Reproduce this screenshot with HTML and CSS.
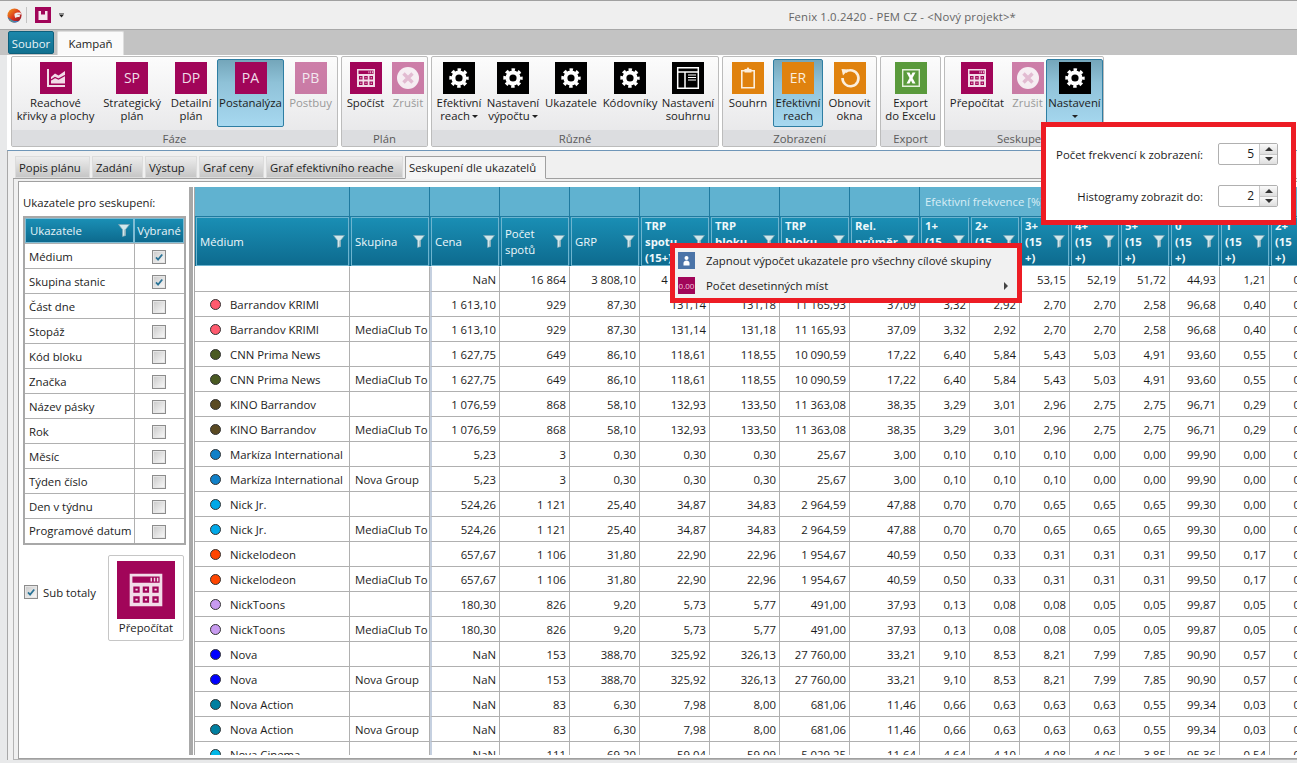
FILE: index.html
```html
<!DOCTYPE html>
<html lang="cs">
<head>
<meta charset="utf-8">
<title>Fenix</title>
<link rel="stylesheet" href="styles.css">
</head>
<body>
<svg class="sprite" width="0" height="0">
  <defs>
    <linearGradient id="logo-a" x1="0" y1="0" x2="1" y2="1"><stop offset="0" stop-color="#f4a21c"/><stop offset=".55" stop-color="#d8301c"/><stop offset="1" stop-color="#7c1430"/></linearGradient>
  </defs>
  <symbol id="gear" viewBox="0 0 32 32">
    <circle cx="16" cy="16" r="5.6" fill="none" stroke="#fff" stroke-width="4"/>
    <circle cx="16" cy="16" r="8.2" fill="none" stroke="#fff" stroke-width="3" stroke-dasharray="3.4 3.04" stroke-dashoffset="1.7"/>
  </symbol>
  <symbol id="calc" viewBox="0 0 32 32">
    <path fill="#f2dce8" fill-rule="evenodd" d="M7 7h18v18H7z M8.500 8.500v3.500h15V8.500z M9 14v3.500h3.500V14z M14.200 14v3.500h3.500V14z M19.500 14v3.500H23V14z M9 19.500V23h3.500v-3.500z M14.200 19.500V23h3.500v-3.500z M19.500 19.500V23H23v-3.500z"/>
    <path fill="#f2dce8" d="M18.500 9.300h.8v2h-.8zM20.300 9.300h.8v2h-.8zM22 9.300h.8v2H22zM10.200 15.300h1.200v1h-1.200zM15.400 15.300h1.200v1h-1.200zM20.700 15.300h1.200v1h-1.200zM10.200 20.800h1.200v1h-1.200zM15.400 20.800h1.200v1h-1.200zM20.700 20.800h1.200v1h-1.200z"/>
  </symbol>
  <symbol id="cancel" viewBox="0 0 32 32">
    <circle cx="16" cy="16" r="11" fill="#f6e6ef"/>
    <path d="M11.500 11.500l9 9M20.500 11.500l-9 9" stroke="#cf81ad" stroke-width="3.400"/>
  </symbol>
  <symbol id="funnel" viewBox="0 0 12 13">
    <path d="M.5.5h11L7.500 5.500v6l-3 1v-7z" fill="#d2e8ec" stroke="#7fa6b4" stroke-width=".7"/>
    <path d="M6.300 5.500h1.200v6l-1.200.4z" fill="#93b4bd"/>
  </symbol>
  <symbol id="tick" viewBox="0 0 14 14">
    <path d="M3.500 7.500l2.400 2.600L10.800 4" fill="none" stroke="#2a7396" stroke-width="2"/>
  </symbol>
</svg>

<div class="app">
  <div class="titlebar">
    <svg class="logo" viewBox="0 0 16 16" width="15" height="15">
      <circle cx="8" cy="8" r="7.500" fill="url(#logo-a)"/>
      <path d="M.8 9.500c.8 3.500 3.700 6 7.200 6 2 0 3.800-.8 5-2-3 .8-6.500.4-8.500-1.200C3 11.300 2 10.500.8 9.500z" fill="#3f7fc0"/>
      <path d="M2 11.800c1.200 2 3.500 3.500 6 3.600-2-1-3.800-2-6-3.600z" fill="#7cb53c"/>
      <path d="M8 6.200c2-1.700 4.500-1.700 7-1l-.6 2c-1.800-.5-3.400-.3-4.600.5 1.200-.2 2.800-.2 4.200.1l-.8 2c-1.700-.4-3-.1-4.200.8-.8-1.200-1.200-3.200-1-4.400z" fill="#efefef"/>
    </svg>
    <span class="qa-sep"></span>
    <svg class="qa-save" viewBox="0 0 16 16" width="16" height="16">
      <rect width="16" height="16" fill="#a10559"/>
      <path d="M3.500 4h9v9h-9z" fill="#f6e6ef"/>
      <path d="M6 4h4v3.500H6z" fill="#a10559"/>
    </svg>
    <span class="qa-more"></span>
    <span class="app-title">Fenix 1.0.2420 - PEM CZ - &lt;Nový projekt&gt;*</span>
  </div>

  <div class="ribbon-tabs">
    <span class="rt rt-file">Soubor</span>
    <span class="rt rt-on">Kampaň</span>
  </div>

  <div class="ribbon">
    <section class="group g-faze">
      <div class="group-btns">
        <div class="rb"><svg class="ico ico-mag" viewBox="0 0 32 32"><path fill="none" stroke="#f2dce8" stroke-width="2" d="M8 7v17h17"/><path fill="#f2dce8" d="M11 21.500V15l4-3.500 3.500 2L25 9v12.500z"/><path fill="none" stroke="#a10559" stroke-width="1.300" d="M11 18l4-2.500 3.500 1.500 6.500-3.500"/></svg><span>Reachové<br>křivky a plochy</span></div>
        <div class="rb"><span class="ico ico-mag">SP</span><span>Strategický<br>plán</span></div>
        <div class="rb"><span class="ico ico-mag">DP</span><span>Detailní<br>plán</span></div>
        <div class="rb rb-on"><span class="ico ico-mag">PA</span><span>Postanalýza</span></div>
        <div class="rb rb-off"><span class="ico ico-mag">PB</span><span>Postbuy</span></div>
      </div>
      <div class="group-name">Fáze</div>
    </section>
    <section class="group g-plan">
      <div class="group-btns">
        <div class="rb"><svg class="ico ico-mag"><use href="#calc"/></svg><span>Spočíst</span></div>
        <div class="rb rb-off"><svg class="ico ico-mag"><use href="#cancel"/></svg><span>Zrušit</span></div>
      </div>
      <div class="group-name">Plán</div>
    </section>
    <section class="group g-ruzne">
      <div class="group-btns">
        <div class="rb"><svg class="ico ico-blk"><use href="#gear"/></svg><span>Efektivní<br>reach<i class="caret"></i></span></div>
        <div class="rb"><svg class="ico ico-blk"><use href="#gear"/></svg><span>Nastavení<br>výpočtu<i class="caret"></i></span></div>
        <div class="rb"><svg class="ico ico-blk"><use href="#gear"/></svg><span>Ukazatele</span></div>
        <div class="rb"><svg class="ico ico-blk"><use href="#gear"/></svg><span>Kódovníky</span></div>
        <div class="rb"><svg class="ico ico-blk" viewBox="0 0 32 32"><path fill="none" stroke="#fff" stroke-width="1.500" d="M5.700 5.700h20.600v20.600H5.700zM6 10h20M13 10v16"/><path stroke="#fff" d="M16 13h8M16 15.500h8M16 18h8"/></svg><span>Nastavení<br>souhrnu</span></div>
      </div>
      <div class="group-name">Různé</div>
    </section>
    <section class="group g-zobr">
      <div class="group-btns">
        <div class="rb"><svg class="ico ico-org" viewBox="0 0 32 32"><path fill="none" stroke="#fbeedd" stroke-width="1.600" d="M9.800 8.800h12.400v17H9.800z"/><path fill="#fbeedd" d="M12.500 7h2l1.500-2 1.500 2h2v3.500h-7z"/></svg><span>Souhrn</span></div>
        <div class="rb rb-on"><span class="ico ico-org">ER</span><span>Efektivní<br>reach</span></div>
        <div class="rb"><svg class="ico ico-org" viewBox="0 0 32 32"><path fill="none" stroke="#fbeedd" stroke-width="2.600" d="M11.500 10a8 8 0 1 1-3 6"/><path fill="#fbeedd" d="M7.500 7l7 .5-5.500 6z"/></svg><span>Obnovit<br>okna</span></div>
      </div>
      <div class="group-name">Zobrazení</div>
    </section>
    <section class="group g-export">
      <div class="group-btns">
        <div class="rb"><svg class="ico ico-grn" viewBox="0 0 32 32"><path fill="none" stroke="#e4f0dc" stroke-width="1.400" d="M7.700 7.700h16.600v16.600H7.700z"/><path fill="#fff" d="M11.500 10.500h3l1.500 3 1.500-3h3l-3 5.500 3 5.500h-3L16 18.500l-1.500 3h-3l3-5.500z"/></svg><span>Export<br>do Excelu</span></div>
      </div>
      <div class="group-name">Export</div>
    </section>
    <section class="group g-sesk">
      <div class="group-btns">
        <div class="rb"><svg class="ico ico-mag"><use href="#calc"/></svg><span>Přepočítat</span></div>
        <div class="rb rb-off"><svg class="ico ico-mag"><use href="#cancel"/></svg><span>Zrušit</span></div>
        <div class="rb rb-on"><svg class="ico ico-blk"><use href="#gear"/></svg><span>Nastavení<br><i class="caret caret-solo"></i></span></div>
      </div>
      <div class="group-name">Seskupení</div>
    </section>
  </div>

  <div class="doc">
    <div class="tabs">
      <span class="tab">Popis plánu</span>
      <span class="tab">Zadání</span>
      <span class="tab">Výstup</span>
      <span class="tab">Graf ceny</span>
      <span class="tab">Graf efektivního reache</span>
      <span class="tab tab-on">Seskupení dle ukazatelů</span>
    </div>
    <div class="tab-page">
      <div class="page-inner">
        <div class="side">
          <div class="side-head">Ukazatele pro seskupení:</div>
          <table class="ind">
            <thead>
              <tr><th><div class="ind-h">Ukazatele<svg class="fn"><use href="#funnel"/></svg></div></th><th><div class="ind-h ind-h2">Vybrané</div></th></tr>
            </thead>
            <tbody>
              <tr><td>Médium</td><td><span class="cb"><svg><use href="#tick"/></svg></span></td></tr>
              <tr><td>Skupina stanic</td><td><span class="cb"><svg><use href="#tick"/></svg></span></td></tr>
              <tr><td>Část dne</td><td><span class="cb"></span></td></tr>
              <tr><td>Stopáž</td><td><span class="cb"></span></td></tr>
              <tr><td>Kód bloku</td><td><span class="cb"></span></td></tr>
              <tr><td>Značka</td><td><span class="cb"></span></td></tr>
              <tr><td>Název pásky</td><td><span class="cb"></span></td></tr>
              <tr><td>Rok</td><td><span class="cb"></span></td></tr>
              <tr><td>Měsíc</td><td><span class="cb"></span></td></tr>
              <tr><td>Týden číslo</td><td><span class="cb"></span></td></tr>
              <tr><td>Den v týdnu</td><td><span class="cb"></span></td></tr>
              <tr><td>Programové datum</td><td><span class="cb"></span></td></tr>
            </tbody>
          </table>
          <div class="side-foot">
            <label class="sub"><span class="cb"><svg><use href="#tick"/></svg></span>Sub totaly</label>
            <div class="calc-btn">
              <svg class="calc-ico"><use href="#calc"/></svg>
              <span>Přepočítat</span>
            </div>
          </div>
        </div>
        <div class="split"></div>
        <div class="grid-wrap">
          <table class="grid">
            <colgroup><col class="c-med"><col class="c-sk"><col class="c-70"><col class="c-70"><col class="c-70"><col class="c-70"><col class="c-70"><col class="c-70"><col class="c-70"><col class="c-50"><col class="c-50"><col class="c-50"><col class="c-50"><col class="c-50"><col class="c-50"><col class="c-50"><col class="c-50"></colgroup>
            <thead>
              <tr class="band"><th></th><th></th><th></th><th></th><th></th><th></th><th></th><th></th><th></th><th colspan="8">Efektivní frekvence [%]</th></tr>
              <tr class="heads">
                <th><div class="hd"><span>Médium</span><svg class="fn"><use href="#funnel"/></svg></div></th>
                <th><div class="hd"><span>Skupina</span><svg class="fn"><use href="#funnel"/></svg></div></th>
                <th><div class="hd"><span>Cena</span><svg class="fn"><use href="#funnel"/></svg></div></th>
                <th><div class="hd"><span>Počet spotů</span><svg class="fn"><use href="#funnel"/></svg></div></th>
                <th><div class="hd"><span>GRP</span><svg class="fn"><use href="#funnel"/></svg></div></th>
                <th><div class="hd hd-b"><span>TRP<br>spotu<br>(15+)</span><svg class="fn"><use href="#funnel"/></svg></div></th>
                <th><div class="hd hd-b"><span>TRP<br>bloku<br>(15+)</span><svg class="fn"><use href="#funnel"/></svg></div></th>
                <th><div class="hd hd-b"><span>TRP<br>bloku<br>(15+)</span><svg class="fn"><use href="#funnel"/></svg></div></th>
                <th><div class="hd hd-b"><span>Rel.<br>průměr<br>(15+)</span><svg class="fn"><use href="#funnel"/></svg></div></th>
                <th><div class="hd hd-b"><span>1+<br>(15<br>+)</span><svg class="fn"><use href="#funnel"/></svg></div></th>
                <th><div class="hd hd-b"><span>2+<br>(15<br>+)</span><svg class="fn"><use href="#funnel"/></svg></div></th>
                <th><div class="hd hd-b"><span>3+<br>(15<br>+)</span><svg class="fn"><use href="#funnel"/></svg></div></th>
                <th><div class="hd hd-b"><span>4+<br>(15<br>+)</span><svg class="fn"><use href="#funnel"/></svg></div></th>
                <th><div class="hd hd-b"><span>5+<br>(15<br>+)</span><svg class="fn"><use href="#funnel"/></svg></div></th>
                <th><div class="hd hd-b"><span>0<br>(15<br>+)</span><svg class="fn"><use href="#funnel"/></svg></div></th>
                <th><div class="hd hd-b"><span>1<br>(15<br>+)</span><svg class="fn"><use href="#funnel"/></svg></div></th>
                <th><div class="hd hd-b"><span>2+<br>(15<br>+)</span><svg class="fn"><use href="#funnel"/></svg></div></th>
              </tr>
            </thead>
            <tbody>
              <tr><td></td><td></td><td>NaN</td><td>16&nbsp;864</td><td>3&nbsp;808,10</td><td>4&nbsp;121,38</td><td></td><td></td><td></td><td></td><td></td><td>53,15</td><td>52,19</td><td>51,72</td><td>44,93</td><td>1,21</td><td>0,28</td></tr>
              <tr><td><i class="dot d-barr"></i>Barrandov KRIMI</td><td></td><td>1&nbsp;613,10</td><td>929</td><td>87,30</td><td>131,14</td><td>131,18</td><td>11&nbsp;165,93</td><td>37,09</td><td>3,32</td><td>2,92</td><td>2,70</td><td>2,70</td><td>2,58</td><td>96,68</td><td>0,40</td><td>0,22</td></tr>
              <tr><td><i class="dot d-barr"></i>Barrandov KRIMI</td><td>MediaClub To</td><td>1&nbsp;613,10</td><td>929</td><td>87,30</td><td>131,14</td><td>131,18</td><td>11&nbsp;165,93</td><td>37,09</td><td>3,32</td><td>2,92</td><td>2,70</td><td>2,70</td><td>2,58</td><td>96,68</td><td>0,40</td><td>0,22</td></tr>
              <tr><td><i class="dot d-cnn"></i>CNN Prima News</td><td></td><td>1&nbsp;627,75</td><td>649</td><td>86,10</td><td>118,61</td><td>118,55</td><td>10&nbsp;090,59</td><td>17,22</td><td>6,40</td><td>5,84</td><td>5,43</td><td>5,03</td><td>4,91</td><td>93,60</td><td>0,55</td><td>0,41</td></tr>
              <tr><td><i class="dot d-cnn"></i>CNN Prima News</td><td>MediaClub To</td><td>1&nbsp;627,75</td><td>649</td><td>86,10</td><td>118,61</td><td>118,55</td><td>10&nbsp;090,59</td><td>17,22</td><td>6,40</td><td>5,84</td><td>5,43</td><td>5,03</td><td>4,91</td><td>93,60</td><td>0,55</td><td>0,41</td></tr>
              <tr><td><i class="dot d-kino"></i>KINO Barrandov</td><td></td><td>1&nbsp;076,59</td><td>868</td><td>58,10</td><td>132,93</td><td>133,50</td><td>11&nbsp;363,08</td><td>38,35</td><td>3,29</td><td>3,01</td><td>2,96</td><td>2,75</td><td>2,75</td><td>96,71</td><td>0,29</td><td>0,05</td></tr>
              <tr><td><i class="dot d-kino"></i>KINO Barrandov</td><td>MediaClub To</td><td>1&nbsp;076,59</td><td>868</td><td>58,10</td><td>132,93</td><td>133,50</td><td>11&nbsp;363,08</td><td>38,35</td><td>3,29</td><td>3,01</td><td>2,96</td><td>2,75</td><td>2,75</td><td>96,71</td><td>0,29</td><td>0,05</td></tr>
              <tr><td><i class="dot d-mark"></i>Markíza International</td><td></td><td>5,23</td><td>3</td><td>0,30</td><td>0,30</td><td>0,30</td><td>25,67</td><td>3,00</td><td>0,10</td><td>0,10</td><td>0,10</td><td>0,00</td><td>0,00</td><td>99,90</td><td>0,00</td><td>0,00</td></tr>
              <tr><td><i class="dot d-mark"></i>Markíza International</td><td>Nova Group</td><td>5,23</td><td>3</td><td>0,30</td><td>0,30</td><td>0,30</td><td>25,67</td><td>3,00</td><td>0,10</td><td>0,10</td><td>0,10</td><td>0,00</td><td>0,00</td><td>99,90</td><td>0,00</td><td>0,00</td></tr>
              <tr><td><i class="dot d-nickjr"></i>Nick Jr.</td><td></td><td>524,26</td><td>1&nbsp;121</td><td>25,40</td><td>34,87</td><td>34,83</td><td>2&nbsp;964,59</td><td>47,88</td><td>0,70</td><td>0,70</td><td>0,65</td><td>0,65</td><td>0,65</td><td>99,30</td><td>0,00</td><td>0,05</td></tr>
              <tr><td><i class="dot d-nickjr"></i>Nick Jr.</td><td>MediaClub To</td><td>524,26</td><td>1&nbsp;121</td><td>25,40</td><td>34,87</td><td>34,83</td><td>2&nbsp;964,59</td><td>47,88</td><td>0,70</td><td>0,70</td><td>0,65</td><td>0,65</td><td>0,65</td><td>99,30</td><td>0,00</td><td>0,05</td></tr>
              <tr><td><i class="dot d-nickel"></i>Nickelodeon</td><td></td><td>657,67</td><td>1&nbsp;106</td><td>31,80</td><td>22,90</td><td>22,96</td><td>1&nbsp;954,67</td><td>40,59</td><td>0,50</td><td>0,33</td><td>0,31</td><td>0,31</td><td>0,31</td><td>99,50</td><td>0,17</td><td>0,02</td></tr>
              <tr><td><i class="dot d-nickel"></i>Nickelodeon</td><td>MediaClub To</td><td>657,67</td><td>1&nbsp;106</td><td>31,80</td><td>22,90</td><td>22,96</td><td>1&nbsp;954,67</td><td>40,59</td><td>0,50</td><td>0,33</td><td>0,31</td><td>0,31</td><td>0,31</td><td>99,50</td><td>0,17</td><td>0,02</td></tr>
              <tr><td><i class="dot d-toons"></i>NickToons</td><td></td><td>180,30</td><td>826</td><td>9,20</td><td>5,73</td><td>5,77</td><td>491,00</td><td>37,93</td><td>0,13</td><td>0,08</td><td>0,08</td><td>0,05</td><td>0,05</td><td>99,87</td><td>0,05</td><td>0,00</td></tr>
              <tr><td><i class="dot d-toons"></i>NickToons</td><td>MediaClub To</td><td>180,30</td><td>826</td><td>9,20</td><td>5,73</td><td>5,77</td><td>491,00</td><td>37,93</td><td>0,13</td><td>0,08</td><td>0,08</td><td>0,05</td><td>0,05</td><td>99,87</td><td>0,05</td><td>0,00</td></tr>
              <tr><td><i class="dot d-nova"></i>Nova</td><td></td><td>NaN</td><td>153</td><td>388,70</td><td>325,92</td><td>326,13</td><td>27&nbsp;760,00</td><td>33,21</td><td>9,10</td><td>8,53</td><td>8,21</td><td>7,99</td><td>7,85</td><td>90,90</td><td>0,57</td><td>0,32</td></tr>
              <tr><td><i class="dot d-nova"></i>Nova</td><td>Nova Group</td><td>NaN</td><td>153</td><td>388,70</td><td>325,92</td><td>326,13</td><td>27&nbsp;760,00</td><td>33,21</td><td>9,10</td><td>8,53</td><td>8,21</td><td>7,99</td><td>7,85</td><td>90,90</td><td>0,57</td><td>0,32</td></tr>
              <tr><td><i class="dot d-action"></i>Nova Action</td><td></td><td>NaN</td><td>83</td><td>6,30</td><td>7,98</td><td>8,00</td><td>681,06</td><td>11,46</td><td>0,66</td><td>0,63</td><td>0,63</td><td>0,63</td><td>0,55</td><td>99,34</td><td>0,03</td><td>0,00</td></tr>
              <tr><td><i class="dot d-action"></i>Nova Action</td><td>Nova Group</td><td>NaN</td><td>83</td><td>6,30</td><td>7,98</td><td>8,00</td><td>681,06</td><td>11,46</td><td>0,66</td><td>0,63</td><td>0,63</td><td>0,63</td><td>0,55</td><td>99,34</td><td>0,03</td><td>0,00</td></tr>
              <tr><td><i class="dot d-cinema"></i>Nova Cinema</td><td></td><td>NaN</td><td>111</td><td>69,20</td><td>59,04</td><td>59,09</td><td>5&nbsp;029,25</td><td>11,64</td><td>4,64</td><td>4,10</td><td>4,08</td><td>4,06</td><td>3,85</td><td>95,36</td><td>0,54</td><td>0,02</td></tr>
            </tbody>
          </table>
        </div>
      </div>
    </div>
  </div>
</div>

<!-- rozbalene Nastaveni -->
<div class="pop">
  <div class="pop-row">
    <span>Počet frekvencí k zobrazení:</span>
    <div class="spin"><span class="spin-val">5</span><span class="spin-arrows"><i class="up"></i><i class="down"></i></span></div>
  </div>
  <div class="pop-row">
    <span>Histogramy zobrazit do:</span>
    <div class="spin"><span class="spin-val">2</span><span class="spin-arrows"><i class="up"></i><i class="down"></i></span></div>
  </div>
</div>

<!-- kontextove menu nad hlavickou -->
<div class="ctx">
  <div class="ctx-item">
    <svg class="ctx-ico" viewBox="0 0 17 17"><rect width="17" height="17" fill="#4b74a8"/><circle cx="8.500" cy="6" r="2" fill="#fff"/><path d="M5.500 13.500v-2.500c0-1.500 1.500-2.500 3-2.500s3 1 3 2.500v2.500z" fill="#fff"/></svg>
    <span>Zapnout výpočet ukazatele pro všechny cílové skupiny</span>
  </div>
  <div class="ctx-item">
    <span class="ctx-ico ctx-num">0.00</span>
    <span>Počet desetinných míst</span>
    <i class="ctx-arrow"></i>
  </div>
</div>
</body>
</html>
```

FILE: styles.css
```css
* { box-sizing: border-box; }

html, body { margin: 0; height: 100%; }

body {
  overflow: hidden;
  font-family: "Open Sans", "Noto Sans", sans-serif;
  font-size: 11.35px;
  color: #1c1c1c;
  background: #e8e9ea;
}

.sprite { position: absolute; }

.app {
  height: 763px;
  display: flex;
  flex-direction: column;
}

/* title bar */
.titlebar {
  height: 30px;
  flex: none;
  display: flex;
  align-items: center;
  padding-left: 7px;
  background: #efefef;
  border-top: 1px solid #a0a0a0;
  border-bottom: 1px solid #a8a8a8;
}
.logo { flex: none; }
.qa-sep { width: 1px; height: 16px; margin: 0 8px 0 4px; background: #c4c4c4; }
.qa-save { flex: none; }
.qa-more {
  width: 5px;
  height: 5px;
  margin-left: 8px;
  background: #222;
  clip-path: polygon(0 0, 100% 0, 100% 20%, 0 20%, 0 40%, 100% 40%, 50% 100%, 0 40%);
}
.app-title {
  margin-left: auto;
  margin-right: 281px;
  padding-top: 2px;
  letter-spacing: .15px;
  color: #666;
}

/* ribbon tabs */
.ribbon-tabs {
  height: 25px;
  flex: none;
  display: flex;
  align-items: flex-end;
  gap: 3px;
  padding-left: 8px;
  background: #c3c3c3;
}
.rt { height: 24px; line-height: 23px; text-align: center; }
.rt-file {
  width: 46px;
  margin-bottom: 1px;
  height: 23px;
  color: #e8f4f8;
  background: linear-gradient(#1c87ab, #11708f);
  border: 1px solid #0d5f7c;
  border-radius: 2px;
}
.rt-on { width: 67px; background: #fafafa; border: 1px solid #dedede; border-bottom: 0; border-radius: 2px 2px 0 0; }

/* ribbon */
.ribbon {
  height: 95px;
  flex: none;
  display: flex;
  gap: 3px;
  margin-left: 7px;
  padding: 1px 0 0 4px;
  background: #fff;
}
.group {
  height: 91px;
  display: flex;
  flex-direction: column;
  border: 1px solid #bcbcbc;
  border-radius: 2px;
  background: linear-gradient(#fcfcfc, #e5e5e7);
}
.group-btns { flex: 1; display: grid; min-height: 0; }
.group-name {
  height: 16px;
  line-height: 17px;
  text-align: center;
  color: #5a5a5a;
  background: #dcdde0;
}
.g-faze .group-btns { grid-template-columns: 87px 66px 52px 67px 53px; }
.g-plan .group-btns { grid-template-columns: 47px 38px; }
.g-ruzne .group-btns { grid-template-columns: 54px 54px 62px 56px 60px; }
.g-zobr .group-btns { grid-template-columns: 50px 50px 53px; }
.g-export .group-btns { grid-template-columns: 59px; }
.g-sesk .group-btns { grid-template-columns: 64px 37px 57px; }

.rb {
  margin: 2px 0 3px;
  padding-top: 2px;
  display: flex;
  flex-direction: column;
  align-items: center;
  gap: 2px;
  text-align: center;
  line-height: 13px;
  white-space: nowrap;
  border: 1px solid transparent;
  border-radius: 2px;
}
.rb-on {
  border-color: #2e7ea3;
  background: linear-gradient(#74a6ba, #8fc2d8 35%, #a7d8f0);
}
.rb-off { color: #9a9a9a; }
.rb-off .ico { opacity: .5; }

.ico {
  width: 32px;
  height: 32px;
  flex: none;
  display: block;
  text-align: center;
  font-size: 14px;
  line-height: 32px;
  color: #f0dce7;
}
.ico-mag { background: #a10559; }
.ico-blk { background: #000; }
.ico-org { background: #e0820e; color: #fbeedd; }
.ico-grn { background: #5a9a3c; }

.caret {
  display: inline-block;
  margin-left: 2px;
  vertical-align: 2px;
  border: 3px solid transparent;
  border-top-color: #222;
  border-bottom: 0;
}
.caret-solo { margin: 0; }

/* document */
.doc {
  flex: 1;
  min-height: 0;
  display: flex;
  flex-direction: column;
  margin: 0 0 3px 7px;
  padding: 5px 0 0 5px;
  background: #f0f0f0;
  border-top: 1px solid #6f96b8;
  border-left: 1px solid #a8a8a8;
}
.tabs {
  height: 23px;
  flex: none;
  display: flex;
  gap: 2px;
  padding-left: 2px;
  border-bottom: 1px solid #a0a0a0;
}
.tab {
  height: 22px;
  padding: 0 3px;
  line-height: 22px;
  white-space: nowrap;
  border: 1px solid #dcdcdc;
  background: linear-gradient(#ececec, #c6c6c6);
}
.tab:nth-child(1) { width: 75px; }
.tab:nth-child(2) { width: 51px; }
.tab:nth-child(3) { width: 52px; }
.tab:nth-child(4) { width: 65px; }
.tab:nth-child(5) { width: 137px; }
.tab-on { width: 141px; background: #f5f5f5; border-color: #a0a0a0; border-bottom-color: #f5f5f5; height: 23px; }

.tab-page {
  flex: 1;
  min-height: 0;
  display: flex;
  padding: 2px 0 0 4px;
  border-left: 1px solid #b4b4b4;
  border-bottom: 1px solid #b4b4b4;
}
.page-inner {
  flex: 1;
  min-width: 0;
  display: flex;
  padding: 5px 0 3px;
  background: #fff;
  border-left: 1px solid #a0a0a0;
  border-top: 1px solid #a0a0a0;
  border-bottom: 1px solid #a0a0a0;
}

/* left panel */
.side { width: 170px; flex: none; padding-left: 4px; }
.side-head { height: 29px; line-height: 32px; color: #222; }

.ind {
  width: 163px;
  table-layout: fixed;
  border-collapse: collapse;
  border: 2px solid #a8a8a8;
}
.ind th { padding: 0; font-weight: 400; height: 25px; background: #fff; }
.ind th:first-child { width: 110px; }
.ind-h {
  height: 25px;
  padding: 0 3px 0 4px;
  display: flex;
  align-items: center;
  justify-content: space-between;
  color: #e8f4f8;
  background: linear-gradient(#1a8fb5, #0d6a8e);
  border: 1px solid #7fbcd4;
}
.ind-h2 { padding: 0; justify-content: center; }
.ind td { height: 25px; padding: 0 4px; border: 1px solid #b0b0b0; white-space: nowrap; overflow: hidden; }
.ind td:last-child { text-align: center; padding: 0; }

.cb {
  display: inline-block;
  width: 14px;
  height: 14px;
  vertical-align: middle;
  border: 1px solid #8c8c8c;
  box-shadow: inset 0 0 0 1px #e6e6e6;
  background: linear-gradient(135deg, #c8c8c8, #fbfbfb);
}
.cb svg { display: block; width: 12px; height: 12px; }

.side-foot {
  display: flex;
  align-items: center;
  justify-content: space-between;
  margin-top: 10px;
  padding: 0 5px 0 1px;
}
.sub { display: flex; align-items: center; gap: 5px; margin-bottom: 11px; }
.calc-btn {
  width: 76px;
  height: 86px;
  display: flex;
  flex-direction: column;
  align-items: center;
  padding-top: 5px;
  gap: 1px;
  border: 1px solid #c6c6c6;
  border-radius: 2px;
}
.calc-ico { width: 58px; height: 58px; background: #a10559; }

.split { width: 4px; flex: none; background: #a8a8a8; }

/* grid */
.grid-wrap {
  flex: 1;
  min-width: 0;
  margin-left: 1px;
  overflow: hidden;
  border-left: 1px solid #a8a8a8;
}
.grid {
  width: 1125px;
  table-layout: fixed;
  border-collapse: separate;
  border-spacing: 0;
}
.c-med { width: 155px; }
.c-sk { width: 80px; }
.c-70 { width: 70px; }
.c-50 { width: 50px; }

.band th {
  height: 30px;
  padding: 0 5px;
  text-align: left;
  font-weight: 400;
  color: #d8eef6;
  background: #60b2d0;
  border-right: 1px solid #1f7a9f;
  border-bottom: 1px solid #1f7a9f;
}
.heads th {
  height: 49px;
  padding: 0;
  font-weight: 400;
  text-align: left;
  background: linear-gradient(#1a8fb5, #0d6a8e);
  border-right: 1px solid #1f7a9f;
}
.hd {
  height: 49px;
  display: flex;
  align-items: center;
  justify-content: space-between;
  gap: 2px;
  margin-left: 1px;
  padding: 0 3px;
  overflow: hidden;
  line-height: 16px;
  color: #eef8fb;
  border: 1px solid #6db4cf;
}
.hd-b { font-weight: 700; }
.fn { width: 12px; height: 13px; flex: none; }

.grid td {
  height: 25px;
  padding: 0 3px;
  text-align: right;
  white-space: nowrap;
  overflow: hidden;
  border-right: 1px solid #b0b0b0;
  border-bottom: 1px solid #b0b0b0;
}
.grid tbody tr:first-child td { height: 26px; border-top: 1px solid #fff; }
.grid td:first-child { padding-left: 15px; text-align: left; }
.grid td:nth-child(2) { padding-left: 5px; text-align: left; }
.grid td:nth-child(3) { border-left: 2px solid #c5d0e0; }

.dot {
  display: inline-block;
  width: 11px;
  height: 11px;
  margin-right: 9px;
  vertical-align: -1px;
  border-radius: 50%;
  border: 1px solid #333;
}
.d-barr { background: #ff5a6e; }
.d-cnn { background: #4a5a22; }
.d-kino { background: #5a4a22; }
.d-mark { background: #1080c8; }
.d-nickjr { background: #00a8e8; }
.d-nickel { background: #ff4500; }
.d-toons { background: #c89bf0; }
.d-nova { background: #0000ff; }
.d-action { background: #007fa0; }
.d-cinema { background: #00b8e8; }

/* popups */
.pop {
  position: absolute;
  left: 1041px;
  top: 122px;
  width: 255px;
  height: 103px;
  padding: 16px 13px 0 0;
  display: flex;
  flex-direction: column;
  gap: 20px;
  background: #fff;
  border: 5px solid #ed1c24;
}
.pop-row {
  display: grid;
  grid-template-columns: 1fr 60px;
  column-gap: 15px;
  align-items: center;
  text-align: right;
}
.spin {
  height: 22px;
  display: flex;
  border: 1px solid #b0b0b0;
  border-radius: 2px;
}
.spin-val { flex: 1; line-height: 20px; padding-right: 5px; font-size: 12px; }
.spin-arrows { width: 18px; display: flex; flex-direction: column; border-left: 1px solid #c8c8c8; }
.spin-arrows i { flex: 1; display: flex; align-items: center; justify-content: center; background: linear-gradient(#fafafa, #dedede); }
.spin-arrows .up { border-bottom: 1px solid #c8c8c8; }
.up::after { content: ""; border: 4px solid transparent; border-top: 0; border-bottom: 4px solid #333; }
.down::after { content: ""; border: 4px solid transparent; border-bottom: 0; border-top: 4px solid #333; }

.ctx {
  position: absolute;
  left: 670px;
  top: 243px;
  width: 352px;
  height: 60px;
  background: #f1f1f1;
  border: 5px solid #ed1c24;
}
.ctx-item {
  height: 25px;
  display: flex;
  align-items: center;
  gap: 11px;
  padding: 0 9px 0 3px;
}
.ctx-ico { width: 17px; height: 17px; flex: none; }
.ctx-num {
  text-align: center;
  font-size: 8px;
  line-height: 17px;
  color: #f2c6de;
  background: #a10559;
}
.ctx-arrow {
  margin-left: auto;
  border: 4px solid transparent;
  border-right: 0;
  border-left: 4px solid #444;
}
```
